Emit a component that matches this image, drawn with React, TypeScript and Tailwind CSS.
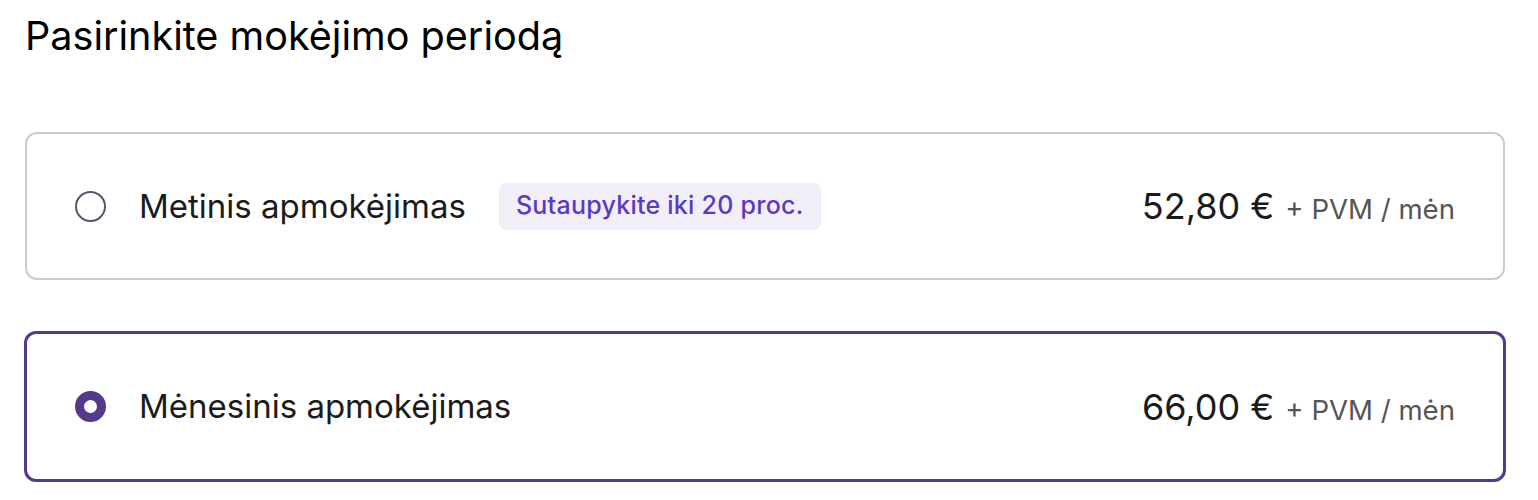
const plans = [
  {
    id: "yearly",
    label: "Metinis apmokėjimas",
    badge: "Sutaupykite iki 20 proc.",
    price: "52,80 €",
  },
  {
    id: "monthly",
    label: "Mėnesinis apmokėjimas",
    badge: null,
    price: "66,00 €",
  },
];

function Radio({ checked }: { checked: boolean }) {
  if (checked) {
    return <span className="block h-[31px] w-[31px] shrink-0 rounded-full border-[9px] border-[#553a8a] bg-white" />;
  }
  return <span className="block h-[31px] w-[31px] shrink-0 rounded-full border-2 border-[#55566a] bg-white" />;
}

export default function App() {
  const selected = "monthly";

  return (
    <main className="min-h-screen bg-white font-['Inter','Liberation_Sans',sans-serif] text-[#1b1b1b]">
      <div className="ml-[25px] w-[1480px] pt-[12px]">
        <h1 className="text-[39.6px] leading-[48px] font-normal text-black">
          Pasirinkite mokėjimo periodą
        </h1>

        <div className="mt-[72px] flex flex-col gap-[51px]">
          {plans.map((plan) => {
            const isSelected = plan.id === selected;
            return (
              <label
                key={plan.id}
                className={
                  isSelected
                    ? "-mx-px flex h-[151px] items-center rounded-[12px] border-[3px] border-[#553a8a] bg-white px-[48px]"
                    : "flex h-[148px] items-center rounded-[12px] border-2 border-[#cfcbc4] bg-white px-[48px]"
                }
              >
                <Radio checked={isSelected} />
                <span className="ml-[33px] text-[33px] leading-none text-[#1b1b1b]">{plan.label}</span>
                {plan.badge && (
                  <span className="ml-[33px] flex h-[47px] items-center rounded-[7px] bg-[#f1eef8] px-[17px] text-[25px] font-medium tracking-[0.01em] text-[#5a3bbf]">
                    {plan.badge}
                  </span>
                )}
                <span className="ml-auto flex items-baseline">
                  <span className="text-[36px] leading-none font-normal text-[#1b1b1b]">{plan.price}</span>
                  <span className="ml-[11px] text-[27.6px] leading-none text-[#555555]">+ PVM / mėn</span>
                </span>
              </label>
            );
          })}
        </div>
      </div>
    </main>
  );
}
